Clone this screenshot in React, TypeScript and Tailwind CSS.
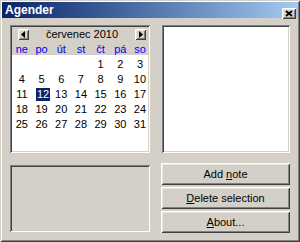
import { ReactNode } from 'react';

const sunken =
  'shadow-[inset_1px_1px_#808080,inset_-1px_-1px_#ffffff,inset_2px_2px_#404040,inset_-2px_-2px_#d4d0c8]';
const raised =
  'shadow-[inset_1px_1px_#ffffff,inset_-1px_-1px_#404040,inset_2px_2px_#e8e6e1,inset_-2px_-2px_#808080]';

const dayNames = ['ne', 'po', 'út', 'st', 'čt', 'pá', 'so'];

// July 2010 starts on Thursday (Sunday-first grid)
const cells: (number | null)[] = [
  null, null, null, null, 1, 2, 3,
  4, 5, 6, 7, 8, 9, 10,
  11, 12, 13, 14, 15, 16, 17,
  18, 19, 20, 21, 22, 23, 24,
  25, 26, 27, 28, 29, 30, 31,
];

const ArrowButton = ({ dir }: { dir: 'left' | 'right' }) => (
  <div className={`w-[11px] h-[11px] bg-[#d4d0c8] flex items-center justify-center ${raised}`}>
    <svg width="5" height="7" viewBox="0 0 5 7">
      {dir === 'left' ? <path d="M4 0 L0 3.5 L4 7 Z" fill="#000" /> : <path d="M1 0 L5 3.5 L1 7 Z" fill="#000" />}
    </svg>
  </div>
);

const WinButton = ({ children }: { children: ReactNode }) => (
  <div className={`h-[22px] bg-[#d4d0c8] flex items-center justify-center text-[11px] text-black ${raised}`}>
    <span>{children}</span>
  </div>
);

const App = () => {
  return (
    <div
      className="w-[300px] h-[242px] bg-[#d4d0c8] p-[2px] shadow-[inset_1px_1px_#d4d0c8,inset_-1px_-1px_#404040,inset_2px_2px_#ffffff,inset_-2px_-2px_#808080] overflow-hidden"
      style={{ fontFamily: '"Liberation Sans", Arial, sans-serif' }}
    >
      {/* Title bar */}
      <div className="h-[16px] flex items-center justify-between bg-gradient-to-r from-[#0a246a] to-[#a6caf0] pl-[3px] pr-[2px]">
        <span className="text-white font-bold text-[12px] leading-none">Agender</span>
        <div className={`w-[14px] h-[11px] mt-[6px] bg-[#d4d0c8] flex items-center justify-center ${raised}`}>
          <svg width="8" height="7" viewBox="0 0 8 7">
            <path d="M1 1 L7 6 M7 1 L1 6" stroke="#000" strokeWidth="1.8" />
          </svg>
        </div>
      </div>

      <div className="pl-[8px] pt-[7px]">
        {/* Top row: calendar + list */}
        <div className="flex gap-[12px]">
          <div className={`w-[140px] h-[128px] bg-white p-[2px] ${sunken}`}>
            <div className="bg-[#d4d0c8] h-[28px]">
              <div className="flex items-center h-[14px] pt-[1px]">
                <div className="ml-[6px]"><ArrowButton dir="left" /></div>
                <div className="flex-1 text-center text-[11px] leading-none text-black">červenec 2010</div>
                <div className="mr-[2px]"><ArrowButton dir="right" /></div>
              </div>
              <div className="grid grid-cols-[repeat(7,19.7px)] h-[14px] items-center pt-[2px]">
                {dayNames.map((d) => (
                  <div key={d} className="text-center text-[11px] leading-none text-[#0000f0]">{d}</div>
                ))}
              </div>
            </div>
            <div className="grid grid-cols-[repeat(7,19.7px)] pt-[2px]">
              {cells.map((n, i) => (
                <div key={i} className="h-[15px] flex items-center justify-center text-[11px] leading-none text-black">
                  {n === 12 ? (
                    <span className="bg-[#0a246a] text-white px-[1px] py-[1px] ml-[3px]">12</span>
                  ) : (
                    n ?? ''
                  )}
                </div>
              ))}
            </div>
          </div>
          <div className={`w-[128px] h-[128px] bg-white ${sunken}`} />
        </div>

        {/* Bottom row: info panel + buttons */}
        <div className="flex gap-[11px] mt-[10px]">
          <div className={`w-[140px] h-[67px] mt-[2px] bg-[#d4d0c8] ${sunken}`} />
          <div className="w-[129px] flex flex-col gap-[2px]">
            <WinButton>
              Add <span className="underline">n</span>ote
            </WinButton>
            <WinButton>
              <span className="underline">D</span>elete selection
            </WinButton>
            <WinButton>
              <span className="underline">A</span>bout...
            </WinButton>
          </div>
        </div>
      </div>
    </div>
  );
};

export default App;
